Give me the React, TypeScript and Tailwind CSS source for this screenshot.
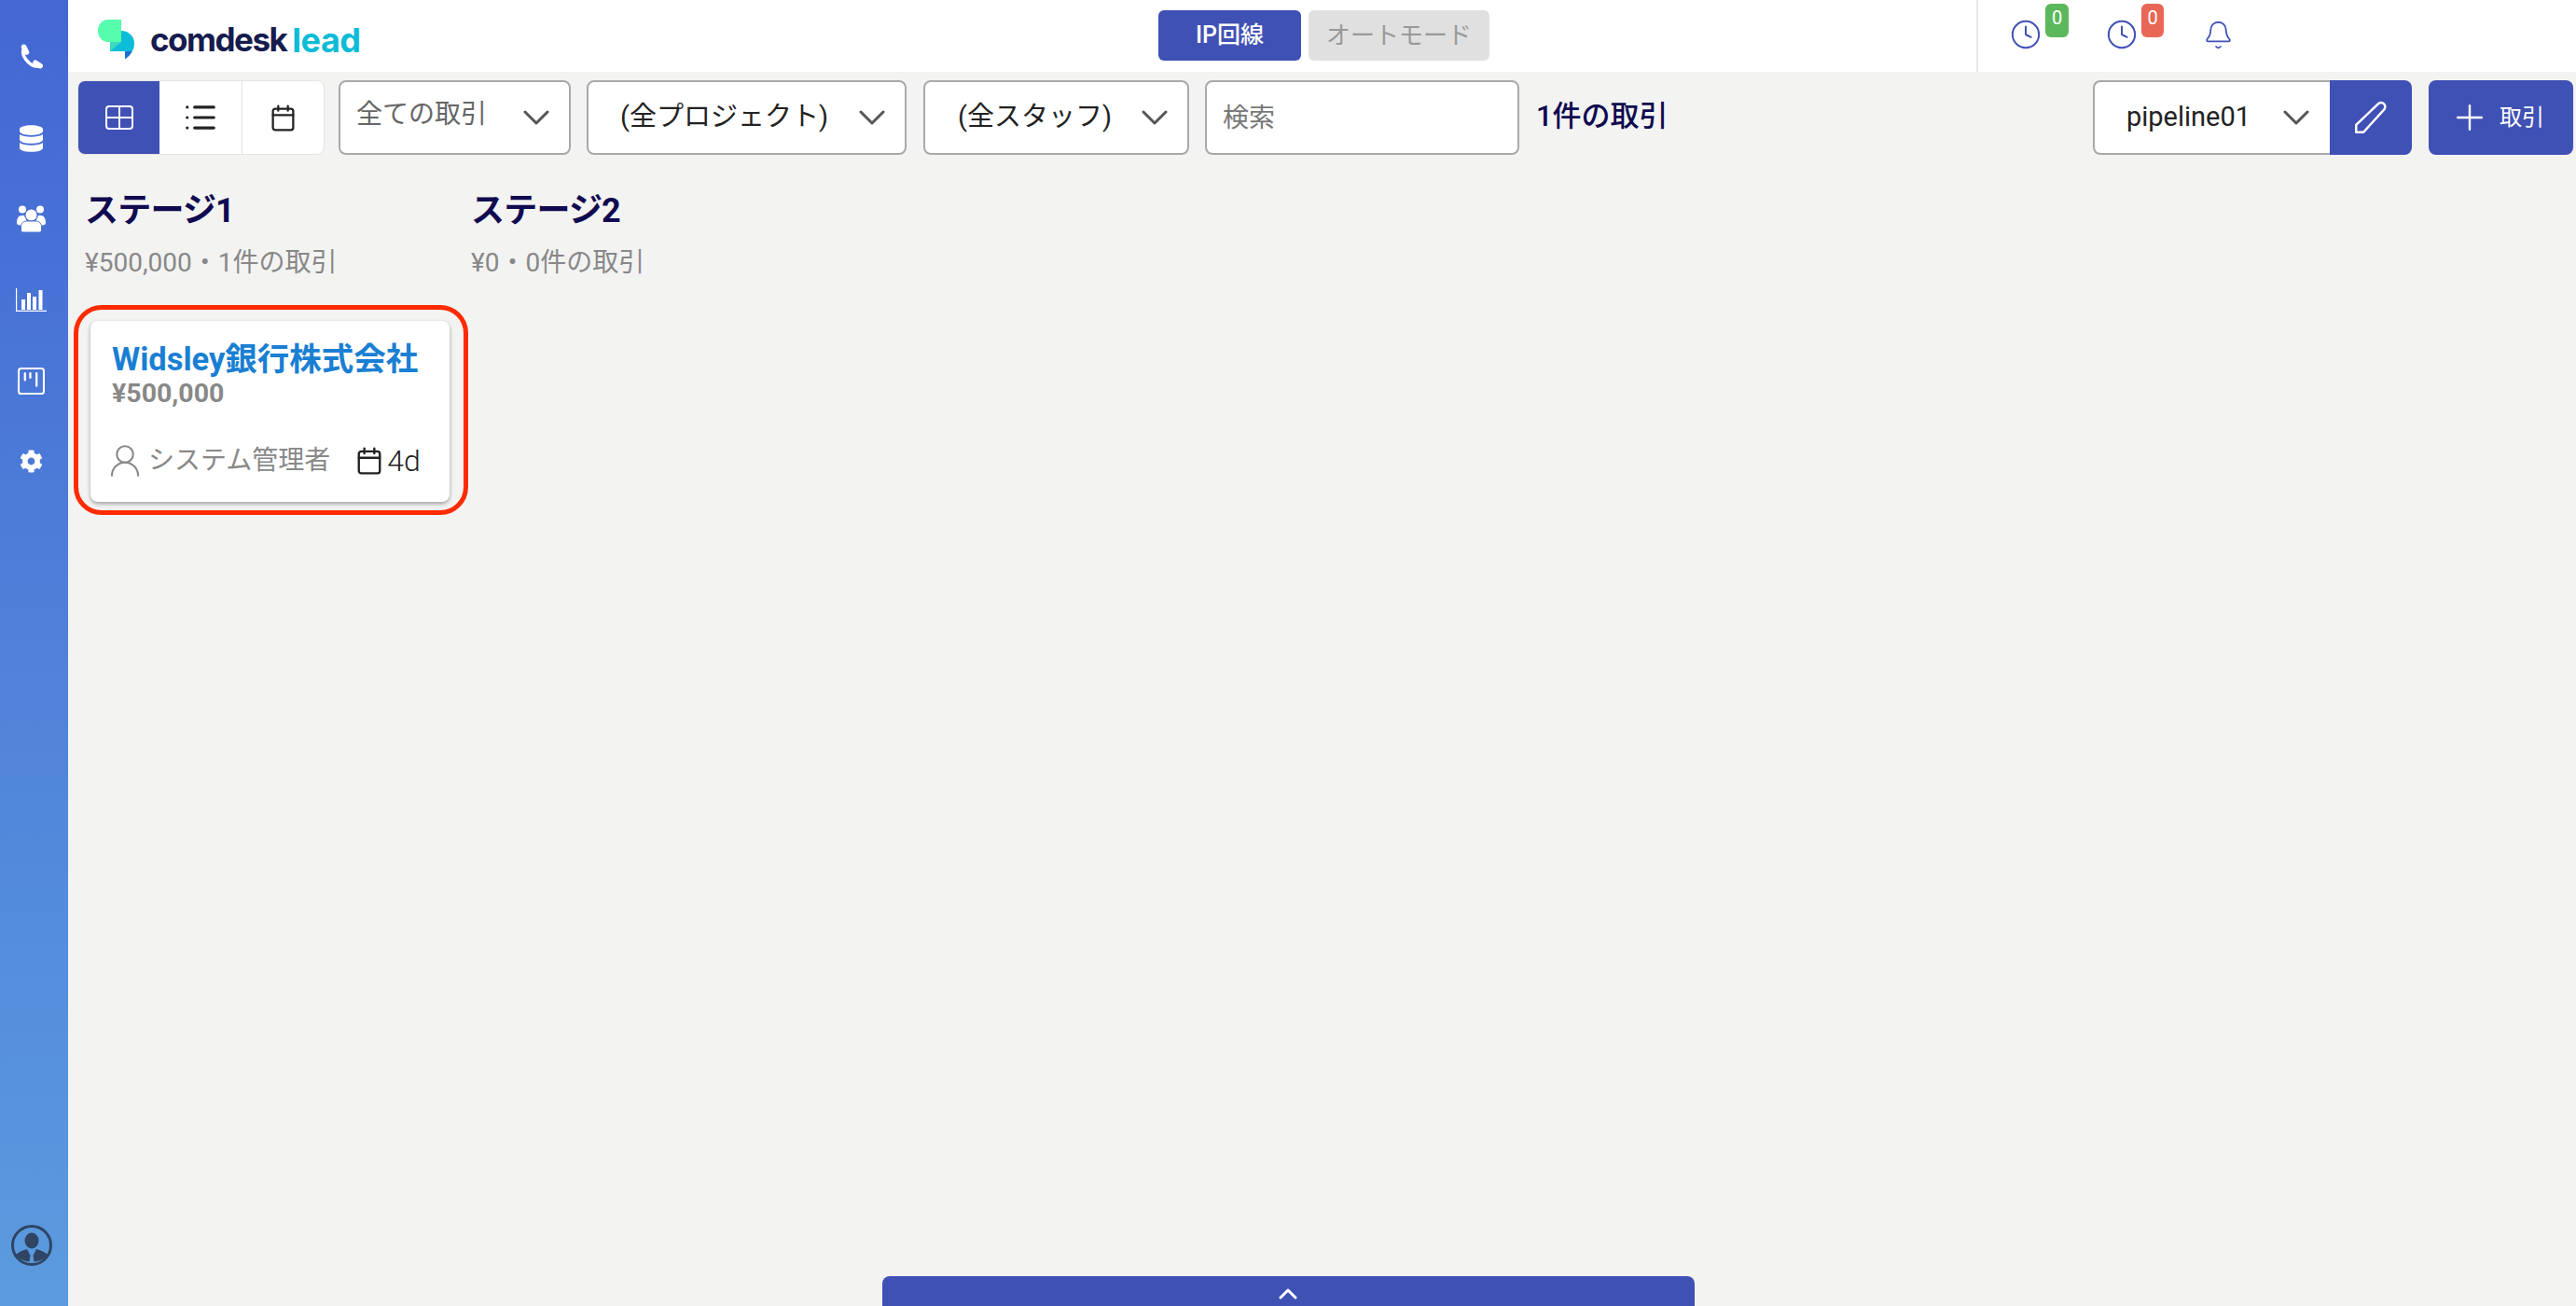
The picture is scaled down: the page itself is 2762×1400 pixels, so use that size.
import React from 'react';
import { Bell, Clock, List, Plus, UserRound } from 'lucide-react';
import { FaCog, FaDatabase } from 'react-icons/fa';

const FONT = 'font-["Roboto","Noto_Sans_CJK_JP",sans-serif]';

const CalendarIcon: React.FC<{ className?: string }> = ({ className }) => (
  <svg viewBox="0 0 24 28" fill="none" stroke="currentColor" strokeWidth="2.2" strokeLinecap="round" strokeLinejoin="round" className={className}>
    <rect x="1.5" y="4.5" width="21" height="22" rx="2.5" />
    <path d="M1.5 11h21M7 1.5v5M17 1.5v5" />
  </svg>
);

const Chevron: React.FC<{ className?: string }> = ({ className }) => (
  <svg viewBox="0 0 28 16" fill="none" stroke="currentColor" strokeWidth="3" strokeLinecap="round" strokeLinejoin="round" className={`h-[16px] w-[28px] shrink-0 text-[#555555] ${className ?? ''}`}>
    <path d="M2 2l12 12L26 2" />
  </svg>
);

const Logo = () => (
  <div className="flex items-center">
    <svg viewBox="0 0 42 45" className="h-[45px] w-[42px]">
      <path d="M26 13c8 0 14 6 14 13 0 7-3 12-10 17v-8H14V25l12-12z" fill="#0dbcd9" />
      <path d="M30 35h7.5c-1.500 3.500-4 6-7.500 8.500z" fill="#1b6fd1" />
      <path d="M12 1h14v24H12C5 25 1 19 1 13S5 1 12 1z" fill="#55fdac" />
      <path d="M14 25h12L14 35z" fill="#3bd8c2" />
    </svg>
    <span className='ml-[15px] font-["Inter",sans-serif] text-[35px] leading-none font-bold tracking-[-1.5px] text-[#161c4e]'>comdesk</span>
    <span className='ml-[6px] font-["Inter",sans-serif] text-[36px] leading-none font-bold tracking-[-0.5px] text-[#0cbcd6]'>lead</span>
  </div>
);

const Sidebar = () => (
  <aside className="flex h-full w-[73px] shrink-0 flex-col items-center bg-gradient-to-b from-[#4467d3] to-[#5c9bdf] pr-[6px] pb-[42px] text-white">
    <div className="flex h-[510px] flex-col items-center pt-[47px]">
      <svg viewBox="0 0 24 24" fill="none" stroke="currentColor" strokeLinecap="round" className="h-[27px] w-[27px]">
        <path d="M5.500 4C3 7 4 11 7 15s7 6.500 11 6.500" strokeWidth="3" />
        <path d="M5 3l2.500 5" strokeWidth="5" />
        <path d="M16 18l4.500 3" strokeWidth="5" />
      </svg>
      <FaDatabase className="mt-[60px] h-[29px] w-[25px]" />
      <svg viewBox="0 0 31 29" className="mt-[57px] h-[29px] w-[31px]" fill="currentColor">
        <circle cx="6" cy="4.500" r="4" />
        <circle cx="25" cy="4.500" r="4" />
        <path d="M0 19c0-5 2-8 5-8h3l4 9H6v1.500C2 21.500 0 21 0 19zM31 19c0-5-2-8-5-8h-3l-4 9h6v1.500c4 0 6-.5 6-2.500z" />
        <circle cx="15.500" cy="10.500" r="6.500" stroke="#4a70d6" strokeWidth="1" />
        <path d="M4.500 27v-4c0-4 3-6 6-6h10c3 0 6 2 6 6v4a2 2 0 0 1-2 2h-18a2 2 0 0 1-2-2z" stroke="#4a70d6" strokeWidth="1" />
      </svg>
      <svg viewBox="0 0 33 25" className="mt-[60px] h-[25px] w-[33px]" fill="currentColor">
        <path d="M0 0h1.200v23.800H33V25H0z" />
        <rect x="6" y="12" width="4" height="11" />
        <rect x="12" y="5" width="4" height="18" />
        <rect x="18" y="9" width="4" height="14" />
        <rect x="24.500" y="2" width="4" height="21" />
      </svg>
      <svg viewBox="0 0 28 28" className="mt-[60px] h-[29px] w-[29px]" fill="none" stroke="currentColor" strokeWidth="2" strokeLinecap="round">
        <rect x="1" y="1" width="26" height="26" rx="2.500" />
        <path d="M7.500 6v7M13 6v4.500M19.500 6v13" strokeWidth="2.200" />
      </svg>
      <FaCog className="mt-[59px] h-[25px] w-[25px]" />
    </div>
    <svg viewBox="0 0 46 46" className="mt-auto h-[46px] w-[46px]">
      <circle cx="23" cy="23" r="20.500" fill="none" stroke="#2f4563" strokeWidth="3" />
      <ellipse cx="23" cy="18" rx="7.500" ry="8.500" fill="#2f4563" />
      <path d="M6 33c3-3 8-5 12-6l3.500 7-1 6.500C14 40 9 37 6 33zM40 33c-3-3-8-5-12-6l-3.500 7 1 6.500C32 40 37 37 40 33z" fill="#2f4563" />
    </svg>
  </aside>
);

const Header = () => (
  <header className="flex h-[77px] shrink-0 items-start bg-white">
    <div className="w-[1169px] pt-[20px] pl-[31px]">
      <Logo />
    </div>
    <div className="flex w-[877px] gap-[8px] pt-[11px]">
      <button type="button" className="h-[54px] w-[153px] rounded-[6px] bg-[#4051b5] text-[25px] font-medium text-white">IP回線</button>
      <button type="button" className="h-[54px] w-[194px] rounded-[6px] bg-[#e0e0e0] text-[26px] text-[#999999]">オートモード</button>
    </div>
    <div className="flex h-full flex-1 border-l-2 border-[#e8e8e8]">
      <div className="relative mt-[20px] ml-[34px] h-[34px] w-[34px] text-[#4051b5]">
        <Clock className="h-[34px] w-[34px]" strokeWidth={1.400} />
        <span className="absolute top-[-16px] left-[38px] flex h-[36px] w-[25px] items-start justify-center rounded-[6px] bg-[#5cb85c] text-[20px] leading-[30px] text-white">0</span>
      </div>
      <div className="relative mt-[20px] ml-[69px] h-[34px] w-[34px] text-[#4051b5]">
        <Clock className="h-[34px] w-[34px]" strokeWidth={1.400} />
        <span className="absolute top-[-16px] left-[38px] flex h-[36px] w-[24px] items-start justify-center rounded-[6px] bg-[#e96756] text-[20px] leading-[30px] text-white">0</span>
      </div>
      <Bell className="mt-[21px] ml-[70px] h-[33px] w-[33px] text-[#4051b5]" strokeWidth={1.300} />
    </div>
  </header>
);

const Select: React.FC<{ label: string; width: string; textClass: string }> = ({ label, width, textClass }) => (
  <div className={`flex h-[80px] items-center justify-between rounded-[8px] border-2 border-[#a9a9a9] bg-white pr-[21px] ${width}`}>
    <span className={`whitespace-nowrap leading-none ${textClass}`}>{label}</span>
    <Chevron />
  </div>
);

const Toolbar = () => (
  <div className="flex shrink-0 items-center pt-[9px] pr-[3px] pl-[10px]">
    <div className="flex h-[80px] w-[265px] overflow-hidden rounded-[8px] border border-[#e4e4e4] bg-white">
      <button type="button" aria-label="Board" className="flex w-[87px] items-center justify-center bg-[#4051b5] text-white">
        <svg viewBox="0 0 30 26" fill="none" stroke="currentColor" strokeWidth="2" className="h-[26px] w-[30px]">
          <rect x="1" y="1" width="28" height="24" rx="3" />
          <path d="M15 1v24M1 13h28" />
        </svg>
      </button>
      <button type="button" aria-label="List" className="flex w-[89px] items-center justify-center border-r border-[#e4e4e4] text-[#222222]">
        <List className="h-[38px] w-[38px]" strokeWidth={2} />
      </button>
      <button type="button" aria-label="Calendar" className="flex flex-1 items-center justify-center text-[#222222]">
        <CalendarIcon className="h-[29px] w-[25px]" />
      </button>
    </div>
    <div className="ml-[15px]">
      <Select label="全ての取引" width="w-[249px] pl-[17px]" textClass="mb-[6px] text-[28px] text-[#666666]" />
    </div>
    <div className="ml-[17px]">
      <Select label="(全プロジェクト)" width="w-[343px] pl-[34px]" textClass="mb-[2px] text-[29px] text-[#222222]" />
    </div>
    <div className="ml-[18px]">
      <Select label="(全スタッフ)" width="w-[285px] pl-[35px]" textClass="mb-[2px] text-[29px] text-[#222222]" />
    </div>
    <input
      placeholder="検索"
      className="ml-[17px] h-[80px] w-[337px] rounded-[8px] border-2 border-[#a9a9a9] bg-white pl-[17px] text-[28px] outline-none placeholder:text-[#777777]"
    />
    <span className="ml-[18px] mb-[2px] text-[31px] font-medium whitespace-nowrap text-[#100b50]">1件の取引</span>
    <div className="ml-auto flex">
      <div className="flex h-[80px] w-[254px] items-center justify-between rounded-l-[8px] border-2 border-r-0 border-[#a9a9a9] bg-white pr-[22px] pl-[34px]">
        <span className="text-[29px] text-[#222222]">pipeline01</span>
        <Chevron />
      </div>
      <button type="button" aria-label="Edit" className="flex h-[80px] w-[88px] items-center justify-center rounded-r-[8px] bg-[#4051b5] text-white">
        <svg viewBox="0 0 32 32" fill="none" stroke="currentColor" strokeWidth="2.200" strokeLinejoin="round" className="h-[36px] w-[36px]">
          <path d="M2 30v-7L23 3c1.500-1.500 4-1.500 5.500 0s1.500 4 0 5.500L9 30z" />
        </svg>
      </button>
    </div>
    <button type="button" className="ml-[18px] flex h-[80px] w-[155px] items-center rounded-[8px] bg-[#4051b5] pl-[22px] text-white">
      <Plus className="h-[44px] w-[44px]" strokeWidth={1.300} />
      <span className="ml-[10px] text-[24px]">取引</span>
    </button>
  </div>
);

const Stage: React.FC<{ title: string; summary: string; children?: React.ReactNode }> = ({ title, summary, children }) => (
  <section className="w-[414px] shrink-0">
    <h2 className="text-[36px] leading-[44px] font-bold tracking-[-0.8px] whitespace-nowrap text-[#100b50]">{title}</h2>
    <p className="mt-[16px] text-[28px] leading-[36px] whitespace-nowrap text-[#888888]">{summary}</p>
    {children}
  </section>
);

const DealCard = () => (
  <div className="mt-[27px] -ml-[12px] h-[225px] w-[423px] rounded-[30px] border-[5px] border-[#fd2b00] pt-[12px] pl-[13px]">
    <div className="flex h-[194px] w-[385px] flex-col rounded-[8px] bg-white pt-[21px] pl-[23px] shadow-[0_2px_4px_rgba(0,0,0,0.35)]">
      <p className="text-[34.5px] leading-[40px] font-bold whitespace-nowrap text-[#1a7fd3]">Widsley銀行株式会社</p>
      <p className="text-[28.5px] leading-[34px] font-bold text-[#888888]">¥500,000</p>
      <div className="mt-[34px] flex items-center">
        <UserRound className="-ml-[7px] h-[42px] w-[42px] shrink-0 text-[#888888]" strokeWidth={1.200} />
        <span className="ml-[4px] text-[28px] leading-[32px] whitespace-nowrap text-[#888888]">システム管理者</span>
        <CalendarIcon className="ml-[29px] h-[30px] w-[26px] shrink-0 text-[#222222]" />
        <span className="ml-[6px] text-[32px] leading-[32px] font-light text-[#222222]">4d</span>
      </div>
    </div>
  </div>
);

export default function App() {
  return (
    <div className={`flex h-[1400px] w-[2762px] overflow-hidden bg-[#f3f3f2] ${FONT}`}>
      <Sidebar />
      <main className="flex min-w-0 flex-1 flex-col">
        <Header />
        <Toolbar />
        <div className="flex flex-1 pt-[38px] pl-[18px]">
          <Stage title="ステージ1" summary="¥500,000・1件の取引">
            <DealCard />
          </Stage>
          <Stage title="ステージ2" summary="¥0・0件の取引" />
        </div>
        <div className="flex shrink-0 justify-center pr-[73px]">
          <button type="button" aria-label="Expand" className="flex h-[32px] w-[871px] items-center justify-center rounded-t-[8px] bg-[#4051b5] text-white">
            <svg viewBox="0 0 20 12" fill="none" stroke="currentColor" strokeWidth="3" strokeLinecap="round" strokeLinejoin="round" className="mt-[6px] h-[12px] w-[20px]">
              <path d="M2 10l8-8 8 8" />
            </svg>
          </button>
        </div>
      </main>
    </div>
  );
}
